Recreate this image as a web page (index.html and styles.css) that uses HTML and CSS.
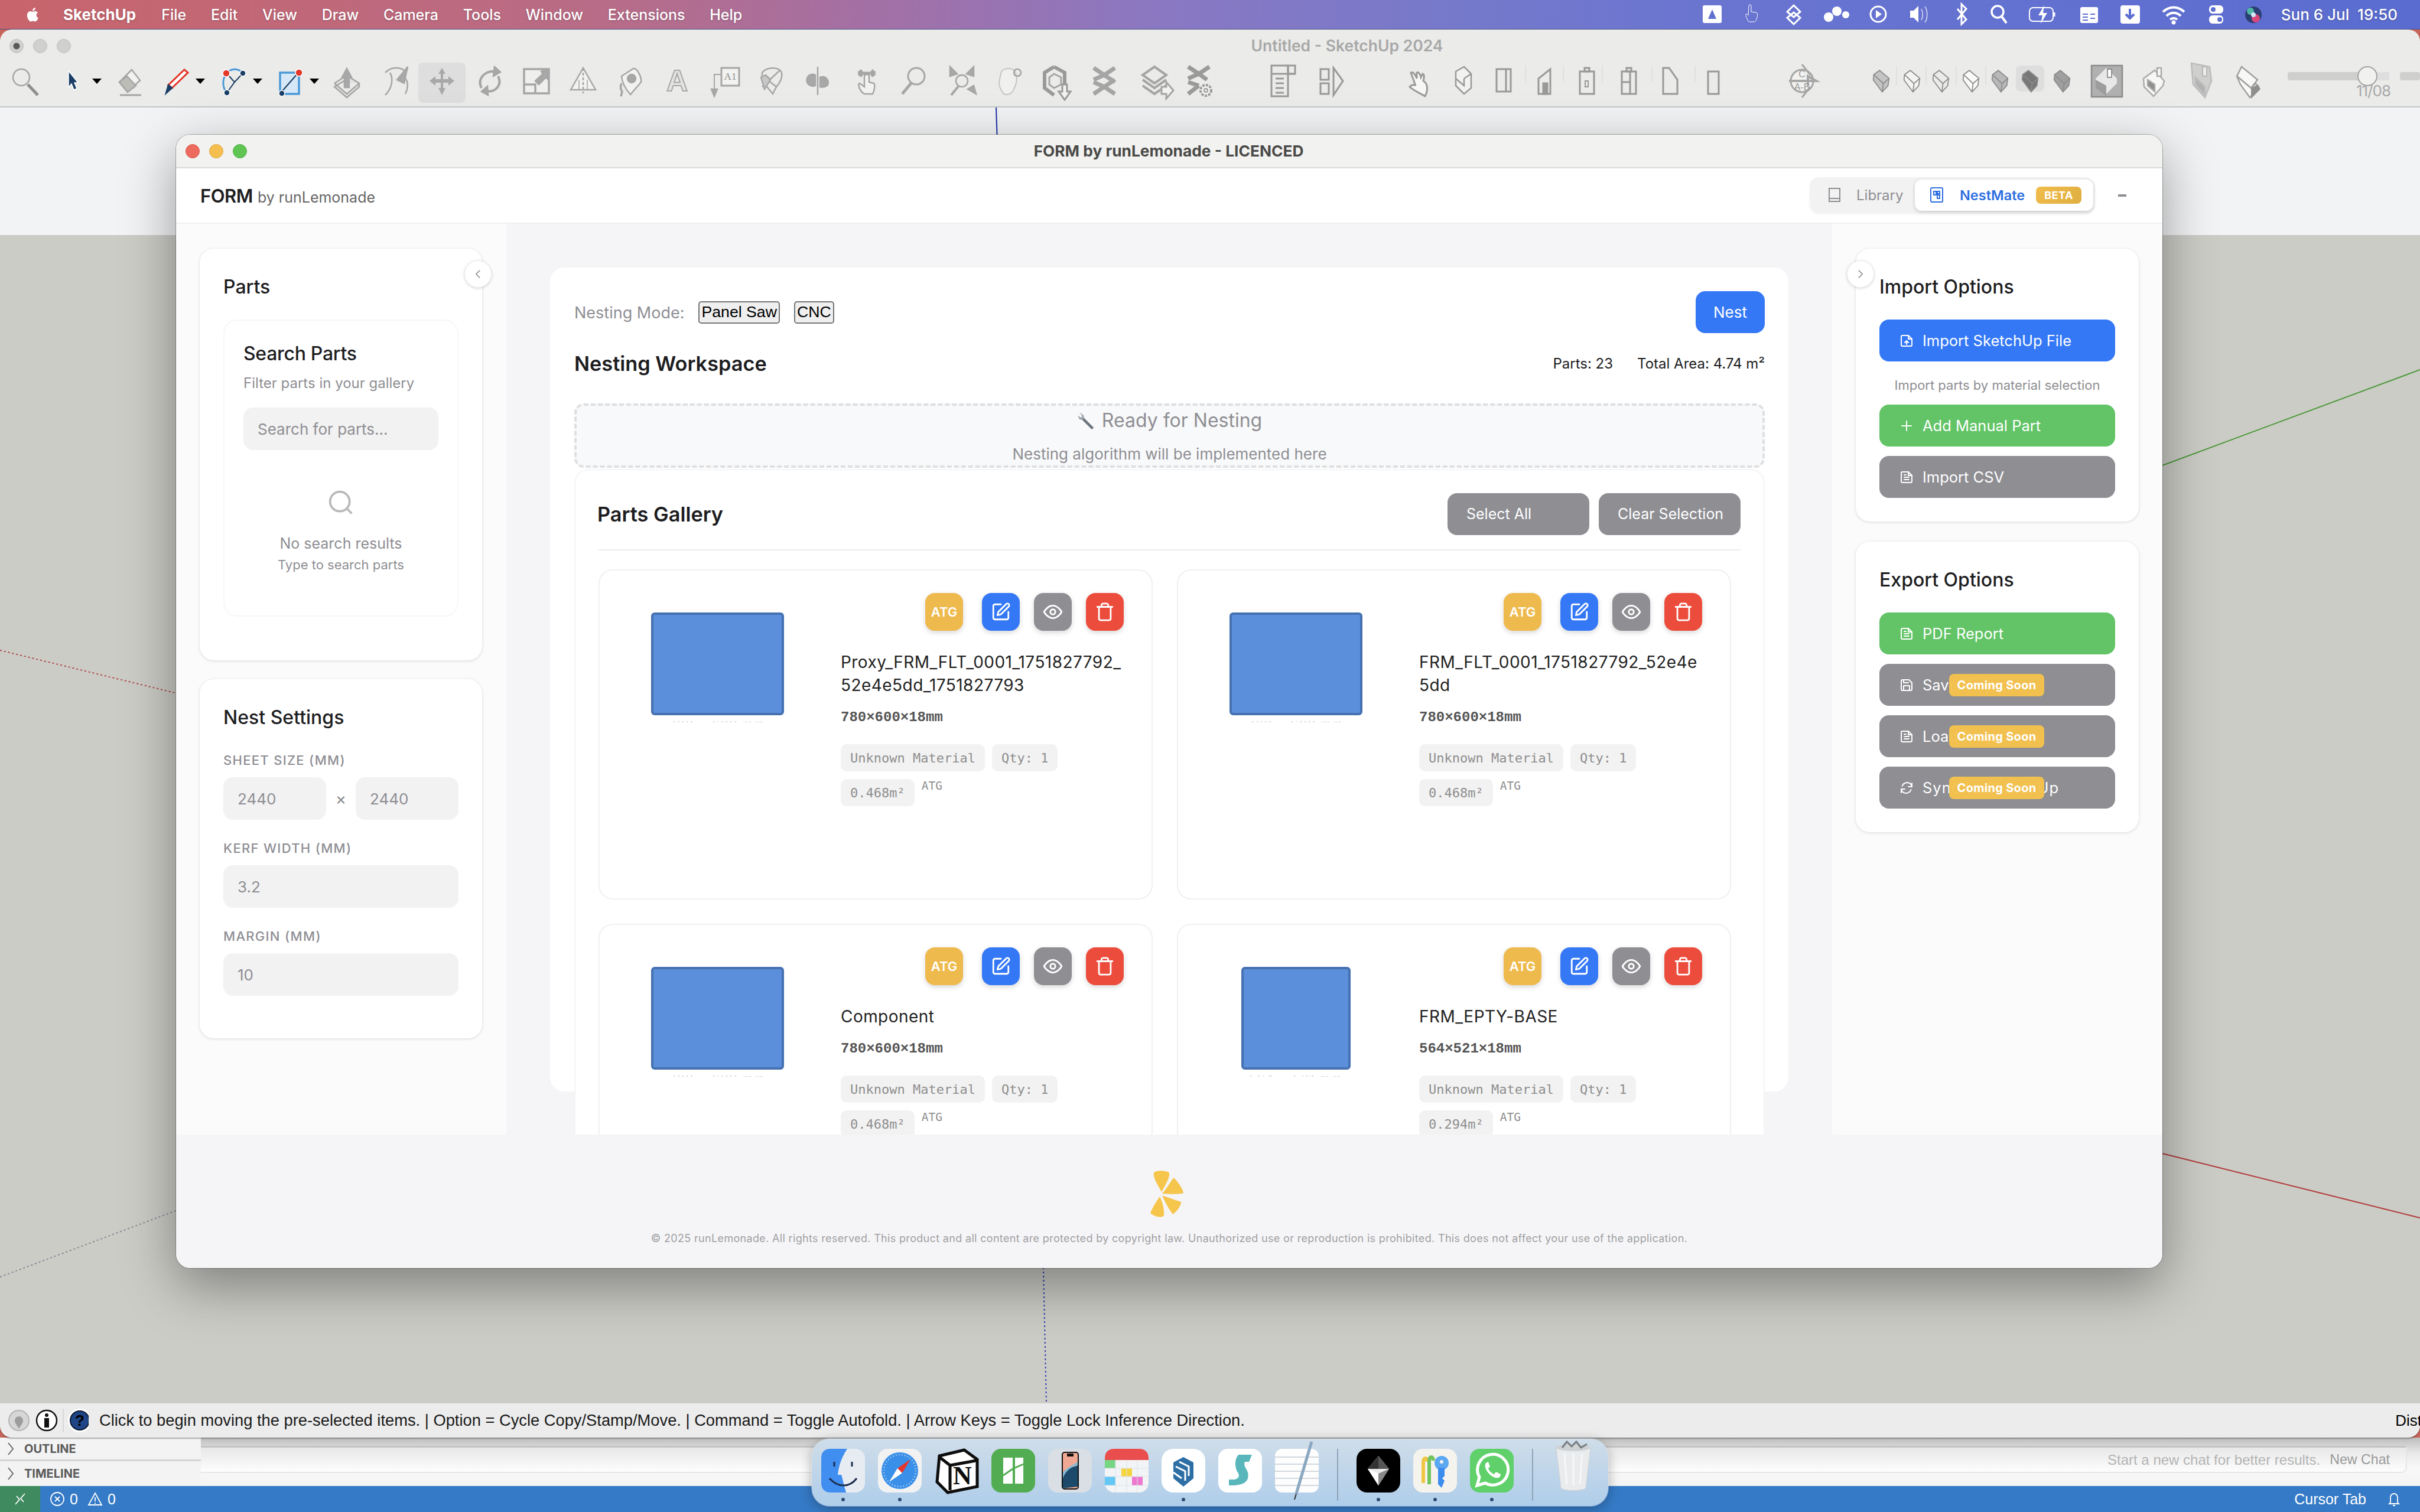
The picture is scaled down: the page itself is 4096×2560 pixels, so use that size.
FILE: index.html
```html
<!DOCTYPE html>
<html lang="en">
<head>
<meta charset="utf-8">
<title>FORM by runLemonade</title>
<link rel="stylesheet" href="styles.css">
</head>
<body>
<svg class="defs" width="0" height="0">
  <defs>
    <symbol id="i-edit" viewBox="0 0 24 24"><path d="M12 3H5a2 2 0 0 0-2 2v14a2 2 0 0 0 2 2h14a2 2 0 0 0 2-2v-7"/><path d="M18.4 2.6a2.1 2.1 0 0 1 3 3L12 15l-4 1 1-4z"/></symbol>
    <symbol id="i-eye" viewBox="0 0 24 24"><path d="M1.5 12S5.5 4.5 12 4.5 22.5 12 22.5 12 18.5 19.5 12 19.5 1.5 12 1.5 12z"/><circle cx="12" cy="12" r="3"/></symbol>
    <symbol id="i-trash" viewBox="0 0 24 24"><path d="M3 6h18"/><path d="M19 6v14a2 2 0 0 1-2 2H7a2 2 0 0 1-2-2V6"/><path d="M8 6V4a2 2 0 0 1 2-2h4a2 2 0 0 1 2 2v2"/></symbol>
    <symbol id="i-doc" viewBox="0 0 24 24"><path d="M15 3H5a2 2 0 0 0-2 2v14a2 2 0 0 0 2 2h14a2 2 0 0 0 2-2V9z"/><path d="M15 3v6h6"/><path d="M8 12h8M8 16h8M8 8h3"/></symbol>
    <symbol id="i-upload" viewBox="0 0 24 24"><path d="M15 3H5a2 2 0 0 0-2 2v14a2 2 0 0 0 2 2h14a2 2 0 0 0 2-2V9z"/><path d="M15 3v6h6"/><path d="M12 18v-6M9 15l3-3 3 3"/></symbol>
    <symbol id="i-save" viewBox="0 0 24 24"><path d="M19 21H5a2 2 0 0 1-2-2V5a2 2 0 0 1 2-2h11l5 5v11a2 2 0 0 1-2 2z"/><path d="M17 21v-8H7v8M7 3v5h8"/></symbol>
    <symbol id="i-sync" viewBox="0 0 24 24"><path d="M21 4v6h-6"/><path d="M3 20v-6h6"/><path d="M4.5 9a9 9 0 0 1 15-3L21 10M3 14l1.500 4a9 9 0 0 0 15-3"/></symbol>
    <symbol id="cube" viewBox="-18 -22 36 44" overflow="visible"><path d="M-3 -20 L15 -5 L13 9 L2 21 L-15 -2 L-14 -12 Z"/><path d="M-14 -12 L4 5 L15 -5 M4 5 L2 21"/></symbol>
  </defs>
</svg>

<div class="desktop">
  <header class="menubar">
    <svg class="apple" viewBox="0 0 24 28" width="24" height="30"><path d="M19.500 14.800c0-3 2.400-4.400 2.500-4.500-1.400-2-3.500-2.300-4.200-2.300-1.800-.2-3.500 1-4.400 1-.9 0-2.300-1-3.800-1-2 0-3.800 1.100-4.800 2.900-2 3.500-.5 8.800 1.500 11.600 1 1.400 2.100 3 3.700 2.900 1.500-.1 2-.9 3.800-.9s2.300.9 3.800.9c1.600 0 2.600-1.400 3.600-2.800 1.100-1.600 1.600-3.200 1.600-3.300-.1 0-3.300-1.200-3.300-4.500zM16.600 5.800c.8-1 1.400-2.400 1.200-3.800-1.200.1-2.600.8-3.500 1.800-.8.900-1.400 2.300-1.200 3.700 1.300.1 2.700-.7 3.500-1.700z"/></svg>
    <span class="menu-item menu-app">SketchUp</span>
    <span class="menu-item">File</span>
    <span class="menu-item">Edit</span>
    <span class="menu-item">View</span>
    <span class="menu-item">Draw</span>
    <span class="menu-item">Camera</span>
    <span class="menu-item">Tools</span>
    <span class="menu-item">Window</span>
    <span class="menu-item">Extensions</span>
    <span class="menu-item">Help</span>
    <svg class="tray" viewBox="2860 0 980 49" width="980" height="49">
      <rect x="2881" y="9" width="32" height="30" rx="3" class="tf"/><path d="M2897 16l7 16h-14z" fill="#5f6fcf"/>
      <path d="M2957 34c-2-5-4-8-3-10 2-1 3 1 4 2l1-16c0-3 4-3 4 0v10l8 1c3 1 3 4 2 8s-2 8-6 8h-6c-2 0-3-1-4-3z" class="ts"/>
      <path d="M3035 9l11 11-11 9-11-9zM3035 21l11 9-11 11-11-11z" class="ts" stroke-width="3"/>
      <circle cx="3094" cy="29" r="8" class="tf"/><circle cx="3108" cy="19" r="8" class="tf"/><circle cx="3123" cy="25" r="6" class="tf"/>
      <circle cx="3178" cy="24" r="13" class="ts" stroke-width="3"/><path d="M3174 17l10 7-10 7z" class="tf"/>
      <path d="M3232 18h6l8-8v28l-8-8h-6z" class="tf"/><path d="M3251 15c3 5 3 14 0 19M3257 11c5 7 5 20 0 27" class="ts" stroke-width="2" opacity=".6"/>
      <path d="M3312 15l15 18-8 8V7l8 8-15 18" class="ts" stroke-width="3"/>
      <circle cx="3380" cy="20" r="10" class="ts" stroke-width="3.500"/><path d="M3387 28l8 11" class="ts" stroke-width="4"/>
      <rect x="3434" y="13" width="40" height="23" rx="6" class="ts" stroke-width="2"/><path d="M3476 21v7" class="ts" stroke-width="3"/><path d="M3459 9l-10 17h7l-3 14 11-18h-7z" class="tf"/>
      <rect x="3520" y="12" width="30" height="27" rx="3" class="tf"/><path d="M3524 24h9M3524 29h9M3524 34h9M3537 24h8M3537 31h8" stroke="#5f6fcf" stroke-width="2"/>
      <rect x="3588" y="9" width="33" height="31" rx="4" class="tf"/><path d="M3604 15v15M3597 24l7 7 7-7" stroke="#5a6cd0" stroke-width="4" fill="none"/>
      <path d="M3660 20c11-10 25-10 36 0M3666 27c7-7 17-7 24 0M3672 33c4-3 8-3 12 0" class="ts" stroke-width="4"/><circle cx="3678" cy="38" r="3.500" class="tf"/>
      <rect x="3738" y="9" width="24" height="14" rx="6" class="tf"/><rect x="3738" y="26" width="24" height="14" rx="6" class="tf"/><circle cx="3745" cy="16" r="4" fill="#5f6fcf"/><circle cx="3756" cy="33" r="4" fill="#5f6fcf"/>
      <circle cx="3813" cy="25" r="14" fill="#2b3f72"/><circle cx="3808" cy="19" r="6" fill="#4fb7a6"/><circle cx="3817" cy="31" r="7" fill="#d8477b"/><circle cx="3813" cy="25" r="4" fill="#d3e8f5"/>
    </svg>
    <span class="clock">Sun 6 Jul&nbsp; 19:50</span>
  </header>

  <section class="su-window">
    <div class="su-title">
      <div class="lights"><i class="light light-off light-dot"></i><i class="light light-off"></i><i class="light light-off"></i></div>
      <span class="su-title-text">Untitled - SketchUp 2024</span>
    </div>
    <svg class="toolbar" viewBox="0 0 4096 76" width="4096" height="78">
      <rect x="708" y="2" width="80" height="68" rx="8" fill="#dedede" stroke="none"/>
      <rect x="3412" y="7" width="48" height="44" rx="8" fill="#dedede" stroke="none"/>
      <rect x="3540" y="7" width="52" height="53" fill="#b0b0b0" stroke="#8c8c8c"/>

      <g transform="translate(43 33)"><circle cx="-7" cy="-6" r="14"/><path d="M4 6L21 24" stroke-width="5" stroke="#8e8e8e"/></g>
      <g transform="translate(123 33)"><path d="M-7 -17L9 3H3L7 13 2 15-2 5-7 11Z" fill="#1b3e66" stroke="#fff" stroke-width="1.500"/></g>
      <path class="dd" d="M156 29h16l-8 9z"/><path class="dd" d="M331 29h16l-8 9z"/><path class="dd" d="M428 29h16l-8 9z"/><path class="dd" d="M524 29h16l-8 9z"/>
      <g transform="translate(219 33)"><path d="M4 -19L18 -1 -3 19 -17 2Z" fill="#f2f2f0"/><path d="M-4 -8L11 8 -3 19 -17 2Z" fill="#bdbdb8"/><path d="M-16 24H20" stroke-width="3"/></g>
      <g transform="translate(299 33)"><path d="M13 -19L19 -14 -8 12 -14 7Z" fill="#fff" stroke="#e3372a" stroke-width="3"/><path d="M-14 7L-8 12-18 21Z" fill="#1b3e66" stroke="#1b3e66"/></g>
      <g transform="translate(395 33)"><path d="M-12 -13C-3 -22 8 -22 16 -13" stroke="#4b9ad8" stroke-width="3"/><path d="M-12 -13C-20 0-18 12-11 20" stroke="#4b9ad8" stroke-width="3"/><path d="M-7 -8L2 2-11 20M2 2L16 -13" stroke="#1b3e66" stroke-width="2"/><circle cx="-12" cy="-13" r="6" fill="#e3372a" stroke="#fff" stroke-width="1.500"/><circle cx="16" cy="-13" r="5" fill="#1b3e66" stroke="#fff" stroke-width="1.500"/><circle cx="-11" cy="20" r="5" fill="#1b3e66" stroke="#fff" stroke-width="1.500"/></g>
      <g transform="translate(491 33)"><rect x="-17" y="-14" width="32" height="36" fill="#d6e8f7" stroke="#4b9ad8" stroke-width="3.500"/><path d="M-14 18L14 -14" stroke="#1b3e66" stroke-width="2"/><circle cx="15" cy="-14" r="6" fill="#e3372a" stroke="#fff" stroke-width="1.500"/><circle cx="-14" cy="21" r="5" fill="#1b3e66" stroke="#fff" stroke-width="1.500"/></g>
      <g transform="translate(587 33)"><path d="M-21 4L-5 -6M5 -6L21 4 21 10 0 28-21 10Z M-21 4L0 22 21 4" fill="#e2e2e0"/><path d="M0 -21L8 -6H4V11H-4V-6H-8Z" fill="#a8a8a8"/></g>
      <g transform="translate(670 33)"><path d="M-18 -14C-8 -24 6 -24 14 -18M-18 24C-6 12-4 -4 -10 -14" fill="none"/><path d="M20 -24L14 4 2 -2Z" fill="#a8a8a8"/><path d="M16 22C22 10 20 0 16 -4" /></g>
      <g transform="translate(748 33)" fill="#a8a8a8" stroke="none"><path d="M0 -22L6 -12H2V-3H11V-8L21 0 11 8V3H2V12H6L0 24-6 12H-2V3H-11V8L-21 0-11 -8V-3H-2V-12H-6Z"/></g>
      <g transform="translate(829 33)"><path d="M-14 12C-22 -4-8 -18 10 -16" stroke-width="4"/><path d="M8 -24L18 -15 6 -8Z" fill="#a8a8a8"/><path d="M14 -8C22 8 8 20-6 17" stroke-width="4"/><path d="M-4 9L-14 18-3 24Z" fill="#a8a8a8"/></g>
      <g transform="translate(908 33)"><rect x="-21" y="-20" width="42" height="41" stroke-width="3.500" fill="#efefed"/><path d="M-21 6H-2V21" stroke-width="3.500"/><path d="M20 -20L8 -16 11 -12 -2 0 4 6 16 -6 19 -3Z" fill="#a8a8a8"/></g>
      <g transform="translate(987 33)"><path d="M0 -22L-21 15H21Z" fill="#f2f2f0"/><path d="M0 -22V21" stroke-dasharray="5 3"/><path d="M-7 -2V15M7 -2V15" stroke-width="1.500"/></g>
      <g transform="translate(1067 33)"><path d="M-15 -8L5 -21C12 -22 19 -6 18 2L0 23C-8 14-14 4-15 -8Z" fill="#f2f2f0"/><circle cx="2" cy="-4" r="7" fill="#a8a8a8"/><path d="M-15 4C-18 10-16 16-14 18L-16 26" stroke-width="3.500"/></g>
      <text x="1146" y="50" class="ti-a" text-anchor="middle">A</text>
      <g transform="translate(1229 33)"><rect x="-8" y="-22" width="30" height="30" fill="#f2f2f0" stroke-width="3"/><text x="7" y="-2" class="ti-a1" text-anchor="middle">A1</text><path d="M-8 -11H-20V14" stroke-width="2"/><path d="M-25 14H-15L-20 26Z" fill="#a8a8a8"/></g>
      <g transform="translate(1306 33)"><path d="M-16 -14C-8 -24 10 -24 16 -16 20 -8 14 4 8 10L2 22-16 0ZM-12 -6L8 10M14 -18L-16 10" /><path d="M-18 -6L-10 -10-2 -2-12 14Z" fill="#c7c7c7"/></g>
      <g transform="translate(1384 33)"><path d="M0 -24V24"/><path d="M-4 -10C-14 -14-20 -6-18 2-16 8-8 10-4 8Z" fill="#a8a8a8"/><path d="M4 -6C16 -10 20 2 16 8 10 12 6 10 4 10Z" fill="#a8a8a8"/></g>
      <g transform="translate(1467 33)"><path d="M-14 -13H14M-14 -13L-8 -18M14 -13L8 -18M-14 -13L-8 -8M14 -13L8 -8" stroke-width="5"/><path d="M-4 -8V10L-12 4C-16 4-12 18-4 22H10C14 14 14 6 12 4L4 2V-8C4 -12-4 -12-4 -8Z" fill="#f2f2f0"/></g>
      <g transform="translate(1547 33)"><circle cx="4" cy="-8" r="14" stroke-width="3"/><path d="M-5 4L-20 22" stroke-width="5"/></g>
      <g transform="translate(1628 33)"><circle cx="0" cy="0" r="10" stroke-width="2.500"/><path d="M-5 8L-18 24" stroke-width="4"/><path d="M-20 -24L-8 -12-20 -8ZM20 -24L8 -12 20 -8ZM24 22L10 14 20 8Z" fill="#a8a8a8"/></g>
      <g transform="translate(1708 33)"><path d="M-14 -12C-14 -22 6 -24 10 -16 14 -6 14 2 8 14 4 24-8 26-12 18-20 6-16 -2-14 -12Z" stroke-width="2" stroke="#c4c4c4" fill="#f0f0ee"/><circle cx="14" cy="-14" r="6"/></g>
      <g transform="translate(1788 33)"><path d="M-4 -24L14 -14V8M-4 -24L-20 -14V12L-4 24" stroke="#9a9a9a" stroke-width="6"/><path d="M-4 -12L8 -6V6L-4 12-12 6V-6Z" stroke-width="3"/><path d="M10 6H18V18H24L14 32 4 18H10Z" fill="#f2f2f0" stroke-width="3" stroke="#9a9a9a"/></g>
      <g transform="translate(1869 33)" stroke="#a5a5a5" stroke-width="7"><path d="M-18 -22L0 -10 18 -22M-18 -2L0 -10 18 2M-18 22L0 10 18 22M-18 2L0 10 18 -2"/></g>
      <g transform="translate(1954 33)" stroke="#a5a5a5" stroke-width="4"><path d="M0 -24L20 -10 0 4-20 -10ZM-20 -2L0 12 20 -2M-20 8L0 22 20 8"/><path d="M12 10H20V2L32 16 20 30V22H12Z" fill="#f2f2f0" stroke-width="3"/></g>
      <g transform="translate(2029 33)" stroke="#9a9a9a" stroke-width="7"><path d="M-18 -24L0 -12 18 -24M-18 -4L0 -12 14 -2M-18 22L0 8M-18 2L0 8"/><circle cx="12" cy="16" r="9" fill="#f2f2f0" stroke-width="4" stroke-dasharray="4 2"/><circle cx="12" cy="16" r="3" stroke-width="2"/></g>
      <g transform="translate(2172 33)" stroke="#999" stroke-width="3"><rect x="-20" y="-26" width="28" height="52"/><rect x="8" y="-26" width="12" height="14"/><path d="M-20 -12H20M-13 -4H1M-13 4H1M-13 12H1M-13 20H1"/></g>
      <g transform="translate(2253 33)" stroke="#999" stroke-width="3"><rect x="-18" y="-20" width="14" height="18"/><rect x="-18" y="4" width="14" height="18"/><path d="M4 -22L20 0 4 24Z"/></g>
      <g transform="translate(2404 33)" stroke="#9a9a9a" stroke-width="3"><path d="M-16 -14C-12 -16-8 -10-6 -4L-6 -14C-4 -16 0 -12 1 -6L4 -12C8 -10 6 -4 5 0 12 4 14 14 8 26-2 20-12 16-18 10-12 4-8 8-8 8Z" fill="#f7f7f5"/></g>
      <g transform="translate(2476 33)" stroke="#999" stroke-width="2.500"><path d="M-12 -16L2 -24 14 -12V12L2 22-12 8Z" fill="#f2f2f0"/><path d="M2 -4L14 -12M2 -4V8L-12 -4"/></g>
      <g transform="translate(2545 33)" stroke="#999" stroke-width="3"><rect x="-12" y="-20" width="24" height="38"/><path d="M4 -20V18"/></g>
      <g transform="translate(2616 33)" stroke="#999" stroke-width="3"><path d="M-12 -4L8 -20V22H-12Z"/><rect x="-4" y="4" width="7" height="18" fill="#999"/></g>
      <g transform="translate(2686 33)" stroke="#999" stroke-width="3"><rect x="-12" y="-16" width="24" height="38"/><rect x="-4" y="-22" width="8" height="6"/><rect x="-3" y="0" width="5" height="10" stroke-width="2"/></g>
      <g transform="translate(2757 33)" stroke="#999" stroke-width="3"><rect x="-12" y="-16" width="24" height="38"/><rect x="-4" y="-22" width="8" height="6"/><path d="M2 -16V22M-12 2H2"/></g>
      <g transform="translate(2827 33)" stroke="#999" stroke-width="3"><path d="M-12 -22V22H12V-2L-2 -22Z"/></g>
      <g transform="translate(2899 33)" stroke="#999" stroke-width="3"><path d="M-8 -16H10V22H-8V-4Z"/></g>
      <path d="M2582 7v28M2646 7v28M2712 7v28M2796 7v28M2869 7v28" stroke="#dcdcdc" stroke-width="1.500"/>
      <g transform="translate(3050 33)"><circle r="19" fill="#f2f2f0" stroke-width="3"/><path d="M-22 0H24M12 0L24 0 10 -8V8" stroke-width="4"/><path d="M0 -28L14 -10M0 28L14 10" stroke-width="3"/><text x="0" y="-6" class="ti-sec" text-anchor="middle">C</text><text x="0" y="16" class="ti-sec" text-anchor="middle">A-B</text></g>

      <g stroke="#8c8c8c" stroke-width="2">
        <use href="#cube" x="3168" y="11" width="32" height="44" fill="#c4c4c4"/>
        <use href="#cube" x="3220" y="11" width="32" height="44" fill="#f4f4f2"/>
        <use href="#cube" x="3269" y="11" width="32" height="44" fill="none"/>
        <use href="#cube" x="3320" y="11" width="32" height="44" fill="#fafaf8"/>
        <use href="#cube" x="3369" y="11" width="32" height="44" fill="#b8b8b8"/>
        <use href="#cube" x="3420" y="11" width="32" height="44" fill="#777"/>
        <use href="#cube" x="3474" y="11" width="32" height="44" fill="#a0a0a0"/>
      </g>
      <path d="M3210 8v32M3260 8v32M3311 8v32M3361 8v32" stroke="#dcdcdc" stroke-width="1.500"/>
      <g transform="translate(3565 33)"><path d="M-18 -4L0 -22 18 -4 18 4 0 22-18 8Z" fill="#e8e8e8" stroke="none"/><path d="M-18 -2L0 8V26L-18 12Z" fill="#9d9d9d" stroke="none"/><rect x="2" y="-20" width="7" height="14" fill="#fff" stroke="#777" stroke-width="1.500"/></g>
      <g transform="translate(3645 33)" stroke="#aaa"><path d="M-17 -4L2 -18 18 0 16 8 0 26-16 10Z" fill="#f7f7f5"/><path d="M-10 -2L2 6V18L-10 8Z" fill="#8f8f8f"/><rect x="6" y="-22" width="7" height="14" fill="#f7f7f5"/></g>
      <g transform="translate(3726 33)" stroke="#bcbcbc"><path d="M-17 -30L14 -24 17 0 6 28-14 6Z" fill="#cfcfcd"/><path d="M-10 -6L6 10V24L-10 6Z" fill="#b2b2b2"/><rect x="2" y="-24" width="7" height="16" fill="#f0f0ee"/></g>
      <g transform="translate(3804 33)" stroke="#a0a0a0"><path d="M-10 -24L17 -2 6 12-18 -8Z" fill="#f8f8f6"/><path d="M-18 -8L6 12 14 4 18 12 4 28-12 6Z" fill="#f8f8f6"/><path d="M6 12L18 6 22 14 6 30Z" fill="#8f8f8f" stroke="none"/></g>
      <rect x="3872" y="18" width="172" height="14" rx="4" fill="#cfcfcd" stroke="none"/><rect x="4007" y="18" width="37" height="14" fill="#dedede" stroke="none"/>
      <rect x="4062" y="18" width="34" height="14" rx="4" fill="#cfcfcd" stroke="none"/>
      <circle cx="4007" cy="25" r="16" fill="#f1f1ef" stroke="#a3a3a3" stroke-width="2"/>
      <text x="4017" y="59" class="ti-date" text-anchor="middle">11/08</text>
    </svg>

    <div class="viewport">
      <div class="sky"></div>
      <div class="ground"></div>
      <svg class="axes" viewBox="0 0 4096 2194" width="4096" height="2194">
        <path d="M1686 0L1688 60" stroke="#1d2fa8" stroke-width="2"/>
        <path d="M3660 606L4096 444" stroke="#4f9a3c" stroke-width="2"/>
        <path d="M3660 1771L4096 1880" stroke="#b23a3a" stroke-width="2"/>
        <path d="M0 919L300 992" stroke="#b24a4a" stroke-width="2" stroke-dasharray="3 4"/>
        <path d="M1766 1964L1771 2194" stroke="#3a3fb0" stroke-width="2" stroke-dasharray="3 4"/>
        <path d="M0 1980L300 1867" stroke="#8a8a96" stroke-width="2" stroke-dasharray="3 4"/>
      </svg>
    </div>
  </section>

  <section class="status">
    <svg class="status-icons" viewBox="0 0 150 44" width="150" height="44">
      <circle cx="32" cy="22" r="17" fill="#d6d6d6" stroke="#b4b4b4" stroke-width="2"/><path d="M32 36c-3-6-7-9-7-14a7 7 0 0 1 14 0c0 5-4 8-7 14z" fill="#9d9d9d"/>
      <circle cx="79" cy="22" r="17" fill="#fff" stroke="#111" stroke-width="2.500"/><circle cx="79" cy="13" r="3" fill="#111"/><rect x="75" y="18" width="8" height="16" fill="#111"/>
      <path d="M107 2v40" stroke="#d0d0d0" stroke-width="1.500"/>
      <circle cx="135" cy="22" r="20" fill="#fff"/><circle cx="135" cy="22" r="16" fill="#1f4586" stroke="#0b1a33" stroke-width="2"/><text x="135" y="31" class="q-mark" text-anchor="middle">?</text>
    </svg>
    <span class="status-text">Click to begin moving the pre-selected items. | Option = Cycle Copy/Stamp/Move. | Command = Toggle Autofold. | Arrow Keys = Toggle Lock Inference Direction.</span>
    <span class="status-dist">Dist</span>
  </section>

  <section class="editor">
    <div class="editor-side">
      <div class="outline-row"><svg viewBox="0 0 12 24" width="12" height="24"><path d="M2 2l8 10-8 10"/></svg><span>OUTLINE</span></div>
      <div class="outline-row outline-last"><svg viewBox="0 0 12 24" width="12" height="24"><path d="M2 2l8 10-8 10"/></svg><span>TIMELINE</span></div>
    </div>
    <div class="editor-main">
      <div class="chat-box"><span class="chat-hint">Start a new chat for better results.</span><span class="chat-new">New Chat</span></div>
    </div>
  </section>

  <footer class="bluebar">
    <span class="remote"><svg viewBox="0 0 24 30" width="24" height="30"><path d="M4 24l7-8-5-6M20 6l-7 8 5 6"/></svg></span>
    <svg class="bb-ic" viewBox="0 0 26 26" width="26" height="26"><circle cx="13" cy="13" r="11"/><path d="M9 9l8 8M17 9l-8 8"/></svg><span class="bb-text">0</span>
    <svg class="bb-ic" viewBox="0 0 26 26" width="26" height="26"><path d="M13 3l11 20H2zM13 10v7M13 19v2"/></svg><span class="bb-text">0</span>
    <span class="bb-right">Cursor Tab</span>
    <svg class="bb-ic bb-bell" viewBox="0 0 26 26" width="26" height="26"><path d="M7 19V10a6 6 0 0 1 12 0v9l2 2H5zM11 24h4"/></svg>
  </footer>
</div>

<main class="dialog">
  <div class="dlg-title">
    <div class="lights lights-color"><i class="light light-red"></i><i class="light light-yellow"></i><i class="light light-green"></i></div>
    <span class="dlg-title-text">FORM by runLemonade - LICENCED</span>
  </div>
  <header class="dlg-head">
    <div class="brand"><b>FORM</b><span>by runLemonade</span></div>
    <div class="seg">
      <div class="seg-item">
        <svg class="seg-ic" viewBox="0 0 24 28" width="24" height="30"><path d="M3 3h18v22H3zM3 20h18"/></svg>
        <span>Library</span>
      </div>
      <div class="seg-item seg-active">
        <svg class="seg-ic" viewBox="0 0 24 28" width="24" height="30"><rect x="2" y="2" width="20" height="24" rx="2"/><path d="M7 8h4v6H7zM13 8h4v4h-4zM13 14h4v6h-4z"/></svg>
        <span>NestMate</span>
        <em class="beta">BETA</em>
      </div>
    </div>
    <span class="minimize"></span>
  </header>

  <div class="dlg-body">
    <aside class="side">
      <button class="toggle toggle-l" type="button"><svg viewBox="0 0 12 20" width="10" height="16"><path d="M10 2L2 10l8 8"/></svg></button>
      <section class="card card-parts">
        <h3 class="card-title">Parts</h3>
        <div class="search-card">
          <h4>Search Parts</h4>
          <p class="search-sub">Filter parts in your gallery</p>
          <input class="field field-search" type="text" placeholder="Search for parts...">
          <svg class="empty-ic" viewBox="0 0 24 24" width="44" height="44"><circle cx="11" cy="11" r="9"/><path d="M18 18l4 4"/></svg>
          <p class="empty-a">No search results</p>
          <p class="empty-b">Type to search parts</p>
        </div>
      </section>
      <section class="card card-settings">
        <h3 class="card-title">Nest Settings</h3>
        <label class="lbl">Sheet Size (mm)</label>
        <div class="size-row">
          <input class="field" type="text" value="2440"><span class="times">×</span><input class="field" type="text" value="2440">
        </div>
        <label class="lbl">Kerf Width (mm)</label>
        <input class="field field-full" type="text" value="3.2">
        <label class="lbl">Margin (mm)</label>
        <input class="field field-full" type="text" value="10">
      </section>
    </aside>

    <section class="main">
      <div class="main-card">
        <div class="mode-row">
          <div class="mode">
            <span class="mode-label">Nesting Mode:</span>
            <button class="native" type="button">Panel Saw</button>
            <button class="native" type="button">CNC</button>
          </div>
          <button class="nest-btn" type="button">Nest</button>
        </div>
        <div class="work-row">
          <h2>Nesting Workspace</h2>
          <div class="stats"><span>Parts: 23</span><span>Total Area: 4.74 m²</span></div>
        </div>
        <div class="ready">
          <h3><svg class="wrench" viewBox="0 0 32 32" width="32" height="32"><path d="M4 2l7 5 1 5 16 16-3 3L9 15 4 14 1 7l5 4 3-2z" fill="#9aa3ad"/><path d="M12 12l16 16-3 3L9 15z" fill="#6c747d"/></svg> Ready for Nesting</h3>
          <p>Nesting algorithm will be implemented here</p>
        </div>
        <div class="gallery">
          <div class="gal-head">
            <h2>Parts Gallery</h2>
            <div class="gal-btns">
              <button class="gbtn" type="button">Select All</button>
              <button class="gbtn" type="button">Clear Selection</button>
            </div>
          </div>
          <div class="grid">
            <article class="part">
              <div class="preview"><div class="sheet"></div><div class="cap">780 × 600 mm</div></div>
              <div class="info">
                <div class="actions">
                  <button class="act act-atg" type="button">ATG</button>
                  <button class="act act-blue" type="button"><svg viewBox="0 0 24 24" width="34" height="34"><use href="#i-edit"/></svg></button>
                  <button class="act act-grey" type="button"><svg viewBox="0 0 24 24" width="34" height="34"><use href="#i-eye"/></svg></button>
                  <button class="act act-red" type="button"><svg viewBox="0 0 24 24" width="34" height="34"><use href="#i-trash"/></svg></button>
                </div>
                <h5 class="pname">Proxy_FRM_FLT_0001_1751827792_52e4e5dd_1751827793</h5>
                <div class="dims">780×600×18mm</div>
                <div class="chips"><span class="chip">Unknown Material</span><span class="chip">Qty: 1</span><span class="chip">0.468m²</span><span class="tag">ATG</span></div>
              </div>
            </article>
            <article class="part">
              <div class="preview"><div class="sheet"></div><div class="cap">780 × 600 mm</div></div>
              <div class="info">
                <div class="actions">
                  <button class="act act-atg" type="button">ATG</button>
                  <button class="act act-blue" type="button"><svg viewBox="0 0 24 24" width="34" height="34"><use href="#i-edit"/></svg></button>
                  <button class="act act-grey" type="button"><svg viewBox="0 0 24 24" width="34" height="34"><use href="#i-eye"/></svg></button>
                  <button class="act act-red" type="button"><svg viewBox="0 0 24 24" width="34" height="34"><use href="#i-trash"/></svg></button>
                </div>
                <h5 class="pname">FRM_FLT_0001_1751827792_52e4e5dd</h5>
                <div class="dims">780×600×18mm</div>
                <div class="chips"><span class="chip">Unknown Material</span><span class="chip">Qty: 1</span><span class="chip">0.468m²</span><span class="tag">ATG</span></div>
              </div>
            </article>
            <article class="part">
              <div class="preview"><div class="sheet"></div><div class="cap">780 × 600 mm</div></div>
              <div class="info">
                <div class="actions">
                  <button class="act act-atg" type="button">ATG</button>
                  <button class="act act-blue" type="button"><svg viewBox="0 0 24 24" width="34" height="34"><use href="#i-edit"/></svg></button>
                  <button class="act act-grey" type="button"><svg viewBox="0 0 24 24" width="34" height="34"><use href="#i-eye"/></svg></button>
                  <button class="act act-red" type="button"><svg viewBox="0 0 24 24" width="34" height="34"><use href="#i-trash"/></svg></button>
                </div>
                <h5 class="pname">Component</h5>
                <div class="dims">780×600×18mm</div>
                <div class="chips"><span class="chip">Unknown Material</span><span class="chip">Qty: 1</span><span class="chip">0.468m²</span><span class="tag">ATG</span></div>
              </div>
            </article>
            <article class="part">
              <div class="preview"><div class="sheet sheet-narrow"></div><div class="cap">564 × 521 mm</div></div>
              <div class="info">
                <div class="actions">
                  <button class="act act-atg" type="button">ATG</button>
                  <button class="act act-blue" type="button"><svg viewBox="0 0 24 24" width="34" height="34"><use href="#i-edit"/></svg></button>
                  <button class="act act-grey" type="button"><svg viewBox="0 0 24 24" width="34" height="34"><use href="#i-eye"/></svg></button>
                  <button class="act act-red" type="button"><svg viewBox="0 0 24 24" width="34" height="34"><use href="#i-trash"/></svg></button>
                </div>
                <h5 class="pname">FRM_EPTY-BASE</h5>
                <div class="dims">564×521×18mm</div>
                <div class="chips"><span class="chip">Unknown Material</span><span class="chip">Qty: 1</span><span class="chip">0.294m²</span><span class="tag">ATG</span></div>
              </div>
            </article>
          </div>
        </div>
      </div>
    </section>

    <aside class="side side-r">
      <button class="toggle toggle-r" type="button"><svg viewBox="0 0 12 20" width="10" height="16"><path d="M2 2l8 8-8 8"/></svg></button>
      <section class="card card-import">
        <h3 class="card-title">Import Options</h3>
        <button class="act-btn btn-blue" type="button"><svg viewBox="0 0 24 24" width="24" height="24"><use href="#i-upload"/></svg><span>Import SketchUp File</span></button>
        <p class="import-note">Import parts by material selection</p>
        <div class="btn-stack">
          <button class="act-btn btn-green" type="button"><svg viewBox="0 0 24 24" width="24" height="24"><path d="M4 12h16M12 4v16"/></svg><span>Add Manual Part</span></button>
          <button class="act-btn btn-grey" type="button"><svg viewBox="0 0 24 24" width="24" height="24"><use href="#i-doc"/></svg><span>Import CSV</span></button>
        </div>
      </section>
      <section class="card card-export">
        <h3 class="card-title">Export Options</h3>
        <div class="btn-stack">
          <button class="act-btn btn-green" type="button"><svg viewBox="0 0 24 24" width="24" height="24"><use href="#i-doc"/></svg><span>PDF Report</span></button>
          <button class="act-btn btn-grey" type="button"><svg viewBox="0 0 24 24" width="24" height="24"><use href="#i-save"/></svg><span>Save Project</span><em class="soon">Coming Soon</em></button>
          <button class="act-btn btn-grey" type="button"><svg viewBox="0 0 24 24" width="24" height="24"><use href="#i-doc"/></svg><span>Load Project</span><em class="soon">Coming Soon</em></button>
          <button class="act-btn btn-grey btn-sync" type="button"><svg viewBox="0 0 24 24" width="24" height="24"><use href="#i-sync"/></svg><span>Sync to SketchUp</span><em class="soon">Coming Soon</em></button>
        </div>
      </section>
    </aside>
  </div>

  <footer class="dlg-foot">
    <svg class="lemon" viewBox="0 0 60 84" width="60" height="84">
      <path d="M8 6C10 1 30 1 34 6 36 12 26 30 21 38 17 30 6 14 8 6Z"/>
      <path d="M41 14C47 18 58 34 58 40 54 42 30 42 22 41 28 34 36 22 41 14Z"/>
      <path d="M22 44L54 55C54 62 46 72 40 76 34 68 26 54 22 44Z"/>
      <path d="M18 46C22 54 26 66 25 78 20 84 6 78 2 74 6 64 12 54 18 46Z"/>
    </svg>
    <p>© 2025 runLemonade. All rights reserved. This product and all content are protected by copyright law. Unauthorized use or reproduction is prohibited. This does not affect your use of the application.</p>
  </footer>
</main>

<nav class="dock">
  <div class="dock-item on">
    <svg viewBox="0 0 74 74" width="74" height="74"><rect width="74" height="74" rx="16" fill="#e7ecf2"/><path d="M16 0C5 0 0 6 0 16V58C0 68 6 74 16 74H42C38 60 36 50 34 44H28C30 26 36 12 44 0Z" fill="#3f8ef0"/><path d="M22 22v8M52 22v8" stroke="#1d2e4e" stroke-width="3"/><path d="M14 50C28 66 48 66 60 50" stroke="#1d2e4e" stroke-width="3" fill="none"/></svg>
  </div>
  <div class="dock-item on">
    <svg viewBox="0 0 74 74" width="74" height="74"><rect width="74" height="74" rx="16" fill="#f2f2f3"/><circle cx="37" cy="37" r="31" fill="#3a8fe8"/><circle cx="37" cy="37" r="27" fill="none" stroke="#cfe4fa" stroke-width="3" stroke-dasharray="1 4"/><path d="M55 18L41 41 33 33Z" fill="#e8352c"/><path d="M19 56L33 33 41 41Z" fill="#fff"/></svg>
  </div>
  <div class="dock-item">
    <svg viewBox="0 0 74 74" width="74" height="74"><path d="M8 12L50 2 72 18V64L22 74 4 56Z" fill="#fff" stroke="#0d0d0d" stroke-width="5"/><path d="M8 14L26 28 70 20M26 28V70" fill="none" stroke="#0d0d0d" stroke-width="5"/><text x="47" y="60" class="d-n" text-anchor="middle">N</text></svg>
  </div>
  <div class="dock-item">
    <svg viewBox="0 0 74 74" width="74" height="74"><rect width="74" height="74" rx="16" fill="#52ad52"/><path d="M20 15H36V59H20ZM40 15H54V59H40Z" fill="#fff"/><path d="M20 45L36 34 54 26" stroke="#52ad52" stroke-width="3" fill="none"/></svg>
  </div>
  <div class="dock-item">
    <svg viewBox="0 0 74 74" width="74" height="74"><rect width="74" height="74" rx="16" fill="#d9dfe5"/><rect x="23" y="5" width="29" height="64" rx="5" fill="#151515"/><rect x="25" y="7" width="25" height="60" rx="3" fill="#f0a892"/><path d="M25 40C34 30 42 32 50 28V64L25 67Z" fill="#1d4a6b"/><path d="M50 28C40 30 30 36 25 50L25 40C34 30 42 28 50 22Z" fill="#86bcd3"/><rect x="32" y="8" width="11" height="5" fill="#111"/></svg>
  </div>
  <div class="dock-item">
    <svg viewBox="0 0 74 74" width="74" height="74"><rect width="74" height="74" rx="16" fill="#f2f4f6"/><path d="M0 19V16C0 6 6 0 16 0H58C68 0 74 6 74 16V19Z" fill="#ea4d4d"/><rect y="19" width="18" height="14" fill="#77d684"/><rect x="28" y="33" width="18" height="14" fill="#f5d53f"/><rect y="47" width="18" height="15" fill="#63c8f5"/><rect x="46" y="47" width="18" height="15" fill="#ee77cf"/><path d="M18 19V74M37 19V74M55 19V74M0 33H74M0 47H74M0 62H74" stroke="#dde3e8" stroke-width="1"/></svg>
  </div>
  <div class="dock-item on">
    <svg viewBox="0 0 74 74" width="74" height="74"><rect width="74" height="74" rx="20" fill="#fff"/><path d="M37 14L54 23V50L37 64 20 50V23Z" fill="#2d6ea5"/><path d="M30 22L46 30V46M24 30L40 38V54M20 40L34 50" stroke="#fff" stroke-width="3" fill="none"/></svg>
  </div>
  <div class="dock-item">
    <svg viewBox="0 0 74 74" width="74" height="74"><rect width="74" height="74" rx="16" fill="#fff"/><path d="M34 10H57L52 22H45C41 32 54 36 50 50 47 60 34 62 22 62H18V52H28C36 50 36 44 33 40 29 34 26 20 34 10Z" fill="#59b7bb"/></svg>
  </div>
  <div class="dock-item">
    <svg viewBox="0 0 74 74" width="74" height="74"><rect width="74" height="74" rx="12" fill="#fdfdfd"/><path d="M0 14H74M0 26H74M0 38H74M0 50H74M0 62H74" stroke="#c5cdd4" stroke-width="1.500"/><path d="M62 -12L36 76" stroke="#8ba8c2" stroke-width="5"/><path d="M36 76L33 86" stroke="#333" stroke-width="2"/></svg>
  </div>
  <i class="dock-sep"></i>
  <div class="dock-item on">
    <svg viewBox="0 0 74 74" width="74" height="74"><rect width="74" height="74" rx="18" fill="#000"/><path d="M37 12L55 34 37 62 19 34Z" fill="#e9e9e9"/><path d="M37 12L55 34 37 34Z" fill="#555"/><path d="M37 12L19 34 37 34Z" fill="#333"/><path d="M37 62L19 34 37 42Z" fill="#fff"/><path d="M37 62L55 34 37 42Z" fill="#888"/></svg>
  </div>
  <div class="dock-item on">
    <svg viewBox="0 0 74 74" width="74" height="74"><rect width="74" height="74" rx="16" fill="#f5f3ee"/><path d="M17 58V22C17 14 24 14 24 22" stroke="#f0c645" stroke-width="6" fill="none"/><path d="M27 60V20C27 12 34 12 34 20" stroke="#72c45e" stroke-width="6" fill="none"/><circle cx="48" cy="24" r="12" fill="#5aa7f2"/><circle cx="48" cy="22" r="3" fill="#f5f3ee"/><path d="M44 32H53V46L49 50 53 54 48 66 42 60V32Z" fill="#3d8dee"/></svg>
  </div>
  <div class="dock-item on">
    <svg viewBox="0 0 74 74" width="74" height="74"><rect width="74" height="74" rx="16" fill="#5fd06a"/><path d="M12 62L16 48A26 26 0 1 1 26 58Z" fill="none" stroke="#fff" stroke-width="5"/><path d="M27 24C24 28 26 36 33 43 40 50 48 51 51 47L52 43 44 39 41 43C37 42 32 37 31 33L34 30 31 22Z" fill="#fff"/></svg>
  </div>
  <i class="dock-sep"></i>
  <div class="dock-item">
    <svg viewBox="0 0 74 84" width="74" height="84" class="trash-ic"><path d="M8 10H66L58 78C56 84 18 84 16 78Z" fill="#e9ebec" stroke="#d0d2d4"/><ellipse cx="37" cy="10" rx="29" ry="6" fill="#cfd2d5"/><path d="M18 10l8-10 8 8 8-8 8 10 10-6" stroke="#7a7d80" stroke-width="3" fill="none"/><path d="M22 20L26 72M37 20V74M52 20L48 72" stroke="#f6f7f8" stroke-width="3"/></svg>
  </div>
</nav>
</body>
</html>
```
FILE: styles.css
```css
* { box-sizing: border-box; }
html, body { margin: 0; padding: 0; }
body {
  width: 4096px;
  height: 2560px;
  overflow: hidden;
  position: relative;
  font-family: Inter, "Liberation Sans", sans-serif;
  color: #1d1d1f;
  background: #c8655a;
}
.defs { position: absolute; }
h2, h3, h4, h5, p { margin: 0; }
button { font-family: inherit; cursor: default; }

/* ---------- desktop shell ---------- */
.desktop { display: flex; flex-direction: column; height: 2560px; }

.menubar {
  height: 50px;
  flex: none;
  display: flex;
  align-items: center;
  padding-left: 42px;
  color: #fff;
  background: linear-gradient(90deg, #c8646b 0%, #b86c87 25%, #a370a5 36%, #8a78c2 48%, #7679ca 60%, #6a75d0 70%, #5a6cd0 100%);
  border-bottom: 1px solid #4a5488;
  text-shadow: 0 1px 3px rgba(0, 0, 0, .25);
}
.apple { fill: #fff; margin-right: 41px; flex: none; }
.menu-item { font-size: 25px; font-weight: 500; margin-right: 41.700px; white-space: nowrap; }
.menu-app { font-size: 26px; font-weight: 700; margin-right: 43px; }
.tray { flex: none; margin-left: auto; margin-right: 20px; }
.tf { fill: #fff; }
.ts { fill: none; stroke: #fff; }
.clock { font-size: 26px; font-weight: 500; margin-right: 38px; white-space: nowrap; }

.su-window { flex: 1; display: flex; flex-direction: column; min-height: 0; border-radius: 20px 20px 0 0; overflow: hidden; background: #ebebe9; }
.su-title { height: 54px; flex: none; display: flex; align-items: center; justify-content: center; position: relative; }
.lights { position: absolute; left: 16px; top: 16px; display: flex; gap: 16px; }
.light { width: 24px; height: 24px; border-radius: 50%; display: block; }
.light-off { background: #d0d0ce; border: 1px solid #bcbcba; }
.light-dot { background: radial-gradient(circle, #5a5a5a 0 5px, #d0d0ce 6px); }
.su-title-text { font-size: 26.500px; font-weight: 600; color: #a8a8a8; margin-left: 464px; }
.toolbar { flex: none; display: block; height: 78px; fill: none; stroke: #a6a6a6; stroke-width: 2.5; border-bottom: 2px solid #c4c6c8; }
.dd { fill: #000; stroke: none; }
.ti-a { font: 700 50px "Liberation Sans", sans-serif; fill: #e3e3e1; stroke: #a8a8a8; stroke-width: 2; }
.ti-a1 { font: 400 17px "Liberation Serif", serif; fill: #8d8d8d; stroke: none; }
.ti-sec { font: 400 16px "Liberation Sans", sans-serif; fill: #999; stroke: none; }
.ti-date { font: 400 26px Inter, sans-serif; fill: #a8a8a8; stroke: none; letter-spacing: -1px; }

.viewport { flex: 1; position: relative; display: flex; flex-direction: column; min-height: 0; }
.sky { height: 216px; flex: none; background: #f1f3f4; }
.ground { flex: 1; background: #cbccc6; }
.axes { position: absolute; left: 0; top: 0; fill: none; }

.status {
  height: 58px;
  flex: none;
  display: flex;
  align-items: center;
  background: #ececec;
  border-radius: 0 0 20px 20px;
  position: relative;
  z-index: 1;
  overflow: hidden;
  box-shadow: 0 2px 2px rgba(0, 0, 0, .3);
}
.status-icons { flex: none; margin-right: 18px; }
.q-mark { font: 700 26px "Liberation Sans", sans-serif; fill: #000; }
.status-text { font: 400 27.300px "Liberation Sans", sans-serif; color: #1a1a1a; white-space: nowrap; }
.status-dist { margin-left: auto; margin-right: -3px; font: 400 26px "Liberation Sans", sans-serif; color: #000; }

.editor { height: 82px; flex: none; display: flex; background: #fff; }
.editor-side { width: 340px; flex: none; background: #f3f3f3; }
.outline-row { height: 40px; display: flex; align-items: center; gap: 17px; padding-left: 12px; font-size: 20px; font-weight: 700; color: #5a5a5a; border-bottom: 3px solid #d4d4d4; }
.outline-row svg { fill: none; stroke: #6a6a6a; stroke-width: 2; }
.outline-last { height: 42px; border: 0; }
.editor-main { flex: 1; position: relative; padding: 14px 22px 22px 0; background: linear-gradient(180deg, #bdbdbd 0, #e8e8e8 26px, #f8f8f8 50px, #f4f4f4 100%); }
.chat-box { height: 46px; display: flex; align-items: center; justify-content: flex-end; gap: 16px; padding-right: 27px; border-top: 3px solid #c4c4c4; border-bottom: 2px solid #e6e6e6; border-right: 2px solid #e6e6e6; border-radius: 0 0 10px 0; background: linear-gradient(180deg, #e8e8e8, #fdfdfd); }
.chat-hint { font: 400 24px "Liberation Sans", sans-serif; color: #b4b4b4; }
.chat-new { font: 400 23.200px "Liberation Sans", sans-serif; color: #9a9a9a; }

.bluebar { height: 44px; flex: none; display: flex; align-items: center; background: #357ac6; color: #fff; font: 400 25px "Liberation Sans", sans-serif; }
.remote { width: 68px; height: 44px; display: flex; align-items: center; justify-content: center; background: #3f8a5f; }
.remote svg { fill: none; stroke: #fff; stroke-width: 1.800; }
.bb-ic { fill: none; stroke: #fff; stroke-width: 1.800; margin-left: 16px; flex: none; }
.bb-text { margin-left: 8px; }
.bb-right { margin-left: auto; }
.bb-bell { margin: 0 31px 0 34px; }

/* ---------- plugin dialog ---------- */
.dialog {
  position: absolute;
  left: 298px;
  top: 228px;
  width: 3362px;
  height: 1919px;
  border-radius: 24px;
  overflow: hidden;
  display: flex;
  flex-direction: column;
  background: #fff;
  box-shadow: 0 0 0 1px rgba(0, 0, 0, .28), 0 30px 90px rgba(0, 0, 0, .38);
}
.dlg-title { height: 57px; flex: none; display: flex; align-items: center; justify-content: center; position: relative; background: #f2f2f0; border-bottom: 2px solid #d9d9d7; }
.lights-color { left: 16px; top: 16px; }
.light-red { background: #ed6a5e; border: 1px solid #d9584d; }
.light-yellow { background: #f5bf4f; border: 1px solid #dfa93f; }
.light-green { background: #61c554; border: 1px solid #4fae45; }
.dlg-title-text { font-size: 26.300px; font-weight: 700; color: #4a4a48; margin-left: -2px; }

.dlg-head { height: 94px; flex: none; display: flex; align-items: center; padding: 0 61px 0 41px; border-bottom: 2px solid #f0f0f0; background: #fff; }
.brand { display: flex; align-items: baseline; gap: 8px; margin-right: auto; }
.brand b { font-size: 31px; font-weight: 600; color: #1d1d1f; letter-spacing: -.5px; }
.brand span { font-size: 25px; font-weight: 400; color: #666; }
.seg { width: 482px; height: 61px; padding: 4px 2px 4px 0; margin-top: -2px; display: flex; align-items: stretch; background: #f2f2f2; border-radius: 16px; box-shadow: 0 2px 4px rgba(0, 0, 0, .05); }
.seg-item { display: flex; align-items: center; padding-left: 30px; gap: 25px; font-size: 24px; color: #8e8e93; width: 178px; }
.seg-ic { fill: none; stroke: currentColor; stroke-width: 2; flex: none; }
.seg-active { width: 302px; padding-left: 25px; gap: 27px; font-size: 23.500px; color: #2f6fe0; font-weight: 600; background: #fff; border-radius: 12px; box-shadow: 0 2px 6px rgba(0, 0, 0, .18); }
.beta { margin-left: -8px; padding: 0 14px; height: 29px; display: flex; align-items: center; font-style: normal; font-size: 18px; font-weight: 700; letter-spacing: .5px; color: #fff; border-radius: 8px; background: linear-gradient(135deg, #f1bd4c, #dfae40); }
.minimize { width: 14px; height: 4px; margin-left: 40px; background: #8e8e93; }

.dlg-body { flex: 1; display: flex; min-height: 0; overflow: hidden; }
.side { width: 559px; flex: none; padding: 42px 41px 0 40px; position: relative; background: #fbfbfc; }
.side-r { padding-left: 40px; padding-right: 40px; }
.card { background: #fff; border-radius: 24px; padding: 40px; box-shadow: 0 1px 5px rgba(0, 0, 0, .14); }
.card-title { font-size: 32px; line-height: 50px; font-weight: 500; color: #1d1d1f; }
.card-parts { height: 697px; }
.card-settings { margin-top: 32px; height: 608px; }
.toggle { position: absolute; width: 46px; height: 46px; padding: 0; top: 62px; display: flex; align-items: center; justify-content: center; background: #fff; border: 1px solid #f0f0f0; border-radius: 50%; box-shadow: 0 1px 5px rgba(0, 0, 0, .18); z-index: 2; }
.toggle svg { fill: none; stroke: #8e8e93; stroke-width: 2; }
.toggle-l { right: 25px; }
.toggle-r { left: 25px; }

.search-card { margin-top: 30px; height: 503px; padding: 38px 32px 0; border: 2px solid #f7f7f7; border-radius: 24px; text-align: center; }
.search-card h4 { font-size: 32px; line-height: 36px; font-weight: 500; letter-spacing: -.3px; text-align: left; color: #1d1d1f; }
.search-sub { margin-top: 16px; font-size: 24px; line-height: 32px; color: #8e8e93; text-align: left; }
.field { display: block; height: 72px; min-width: 0; border: 0; outline: 0; border-radius: 16px; background: #f2f2f2; padding: 0 24px; font: 400 26px Inter, sans-serif; color: #8e8e93; }
.field::placeholder { color: #8e8e93; opacity: 1; }
.field-search { margin-top: 25px; width: 100%; }
.empty-ic { display: block; margin: 67px auto 0; fill: none; stroke: #b8b8b8; stroke-width: 2; }
.empty-a { margin-top: 31px; font-size: 25px; line-height: 32px; color: #8e8e93; }
.empty-b { margin-top: 5px; font-size: 22px; line-height: 30px; color: #8e8e93; }

.lbl { display: block; margin: 33px 0 14px; font-size: 22px; line-height: 30px; font-weight: 500; letter-spacing: 1.300px; text-transform: uppercase; color: #8e8e93; }
.card-settings .lbl:first-of-type { margin-top: 32px; }
.size-row { display: flex; align-items: center; justify-content: space-between; }
.size-row .field { width: 174px; }
.times { font-size: 28px; color: #8e8e93; }
.field-full { width: 100%; }

.main { flex: 1; min-width: 0; padding: 74px 74px 0; background: #f5f5f7; overflow: hidden; }
.main-card { height: 1395px; padding: 40px 40px 0 41px; background: #fff; border-radius: 24px; }
.mode-row { height: 71px; display: flex; align-items: center; justify-content: space-between; }
.mode { display: flex; align-items: center; margin-top: 2px; }
.mode-label { font-size: 27px; color: #8e8e93; margin-right: 24px; }
.native { height: 38px; padding: 0 3px; margin: -2px 24px 0 0; font: 400 26.670px "Liberation Sans", sans-serif; color: #000; background: #efefef; border: 2px solid #767676; border-radius: 5px; }
.nest-btn { height: 71px; width: 117px; padding: 0; border: 0; border-radius: 16px; background: #3478f6; color: #fff; font-size: 26px; font-weight: 400; }
.work-row { margin-top: 26px; height: 50px; display: flex; align-items: center; justify-content: space-between; }
.work-row h2, .gal-head h2 { font-size: 34.300px; font-weight: 600; color: #1d1d1f; }
.gal-head h2 { margin-left: -2px; }
.stats { display: flex; gap: 41px; font-size: 24px; color: #1d1d1f; }
.ready { margin-top: 43px; height: 109px; padding-top: 6px; border: 4px dashed #dedfe1; border-radius: 16px; background: #f8f9fa; text-align: center; overflow: hidden; color: #8e8e93; }
.ready h3 { font-size: 32px; line-height: 38px; font-weight: 400; display: flex; align-items: center; justify-content: center; gap: 10px; }
.wrench { flex: none; }
.ready p { margin-top: 21px; font-size: 26px; line-height: 34px; }
.gallery { margin-top: 2px; padding: 40px 39px 0 39px; border: 2px solid #f4f4f4; border-radius: 24px; background: #fff; }
.gal-head { height: 96px; padding-bottom: 25px; display: flex; align-items: center; justify-content: space-between; border-bottom: 2px solid #ececec; }
.gal-btns { display: flex; gap: 16px; }
.gbtn { width: 240px; height: 71px; padding: 0 0 2px 32px; border: 0; border-radius: 16px; background: #8e8e93; color: #fff; font-size: 25px; text-align: left; }
.grid { margin-top: 32px; display: grid; grid-template-columns: 938px 938px; gap: 41px; }
.part { height: 559px; padding: 38px 0 0 38px; border: 2px solid #f0f0f0; border-radius: 24px; display: flex; gap: 47px; background: #fff; }
.preview { width: 323px; flex: none; padding-top: 33px; display: flex; flex-direction: column; align-items: center; }
.sheet { width: 225px; height: 174px; background: #5b8fdc; border: 4px solid #4671b1; border-radius: 6px; }
.sheet-narrow { width: 185px; }
.cap { height: 2px; margin-top: 10px; overflow: hidden; font-size: 20px; line-height: 10px; color: #cfcfcf; letter-spacing: 2px; }
.info { width: 488px; flex: none; }
.actions { display: flex; justify-content: flex-end; gap: 24px; padding-right: 9px; }
.act { width: 64px; height: 64px; padding: 0; border: 0; border-radius: 16px; display: flex; align-items: center; justify-content: center; color: #fff; box-shadow: 0 3px 8px rgba(0, 0, 0, .16); }
.act svg { fill: none; stroke: #fff; stroke-width: 2; stroke-linecap: round; stroke-linejoin: round; }
.act-atg { background: #eeba4e; font-size: 22px; font-weight: 600; margin-right: 8px; }
.act-blue { background: #3478f6; }
.act-grey { background: #8e8e93; }
.act-red { background: #ec4c3c; }
.pname { width: 484px; margin-top: 34px; font-size: 28px; line-height: 39px; letter-spacing: .45px; font-weight: 400; color: #222; word-break: break-all; }
.dims { margin-top: 20px; font: 700 24px/30px "Liberation Mono", monospace; color: #555; }
.chips { margin-top: 30px; display: flex; flex-wrap: wrap; align-items: flex-start; gap: 13px 12px; }
.chip { height: 46px; padding: 0 16px; display: flex; align-items: center; border-radius: 10px; background: #f2f2f2; color: #8e8e8e; font: 400 22px "DejaVu Sans Mono", monospace; white-space: nowrap; }
.tag { font: 400 19.500px/24px "DejaVu Sans Mono", monospace; color: #8e8e8e; }

.btn-stack { display: flex; flex-direction: column; gap: 16px; }
.act-btn { position: relative; width: 100%; height: 71px; padding: 0 0 0 34px; border: 0; border-radius: 16px; display: flex; align-items: center; gap: 15px; color: #fff; font-size: 25.500px; font-weight: 400; }
.act-btn svg { fill: none; stroke: #fff; stroke-width: 2; stroke-linecap: round; stroke-linejoin: round; flex: none; }
.btn-sync span { letter-spacing: 1px; }
.btn-blue { background: #3478f6; }
.btn-green { background: #62c466; }
.btn-grey { background: #8e8e93; }
.card-import { height: 462px; }
.card-import > .act-btn { margin-top: 30px; }
.import-note { height: 73px; line-height: 80px; font-size: 22px; color: #8e8e93; text-align: center; }
.card-export { margin-top: 34px; height: 492px; }
.card-export .btn-stack { margin-top: 30px; }
.soon { position: absolute; left: 118px; top: 17px; width: 161px; height: 38px; display: flex; align-items: center; justify-content: center; font-style: normal; font-size: 20px; font-weight: 700; letter-spacing: .3px; color: #fff; background: rgba(245, 194, 76, .96); border-radius: 8px; }

.dlg-foot { height: 226px; flex: none; display: flex; flex-direction: column; align-items: center; background: #f5f5f7; position: relative; z-index: 1; }
.lemon { margin-top: 59px; margin-left: -9px; fill: #f5c54c; flex: none; }
.dlg-foot p { margin-top: 21px; font-size: 18px; line-height: 24px; letter-spacing: .33px; color: #a0a0a2; white-space: nowrap; }

/* ---------- dock ---------- */
.dock {
  position: absolute;
  left: 1374px;
  top: 2436px;
  width: 1348px;
  height: 114px;
  padding: 17px 0 0 16px;
  display: flex;
  align-items: flex-start;
  gap: 22px;
  border-radius: 30px;
  background: linear-gradient(180deg, #cfdde9, #afcdea);
  box-shadow: 0 0 0 1px rgba(255, 255, 255, .3), 0 4px 20px rgba(0, 0, 0, .3);
  z-index: 3;
}
.dock-item { width: 74px; height: 90px; flex: none; position: relative; }
.dock-item svg { display: block; overflow: visible; }
.dock-item.on::after { content: ""; position: absolute; left: 34px; bottom: 1px; width: 6px; height: 6px; border-radius: 50%; background: #2d4a70; }
.dock-sep { width: 2px; height: 88px; flex: none; background: #8ea4b8; margin: 0 9px; }
.trash-ic { margin-top: -12px; }
.d-n { font: 700 44px "Liberation Serif", serif; fill: #0d0d0d; }
```
